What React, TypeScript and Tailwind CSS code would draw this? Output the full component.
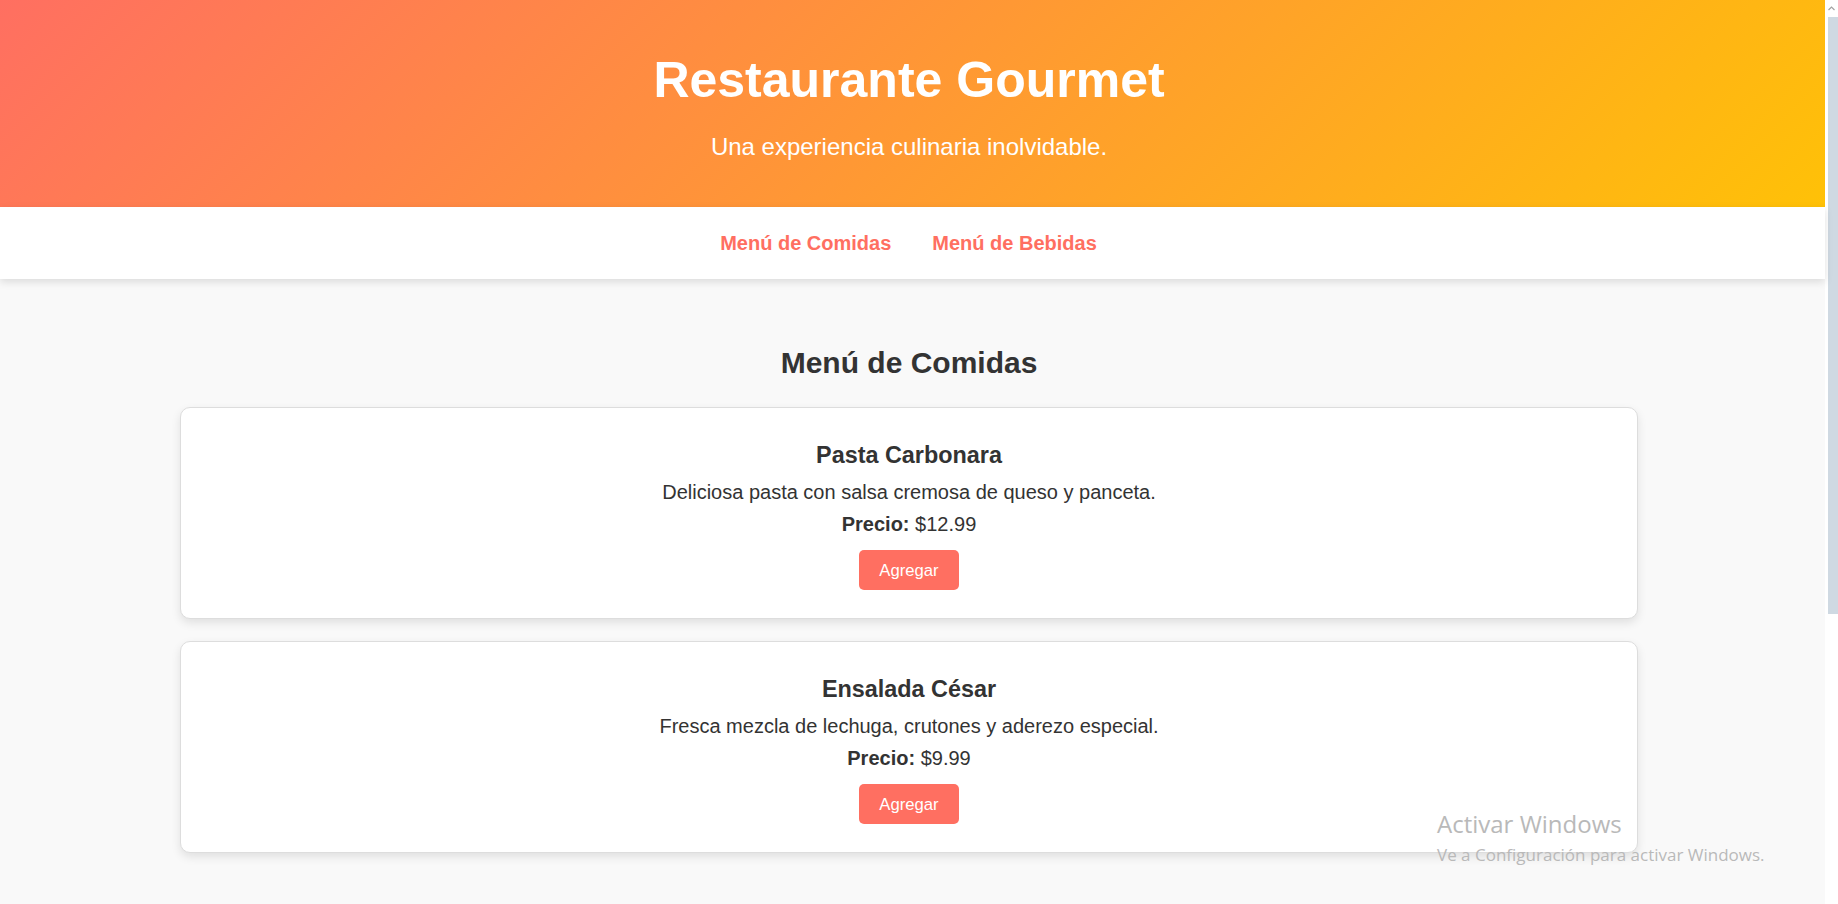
import React from "react";

const items = [
  {
    name: "Pasta Carbonara",
    desc: "Deliciosa pasta con salsa cremosa de queso y panceta.",
    price: "$12.99",
  },
  {
    name: "Ensalada César",
    desc: "Fresca mezcla de lechuga, crutones y aderezo especial.",
    price: "$9.99",
  },
];

function Card({ name, desc, price }: { name: string; desc: string; price: string }) {
  return (
    <div className="flex flex-col items-center rounded-[10px] border border-[#dddddd] bg-white pt-[34px] pb-[28px] text-center shadow-[0_4px_10px_rgba(0,0,0,0.10)]">
      <h3 className="text-[23.4px] leading-[27px] font-bold text-[#333333]">{name}</h3>
      <p className="mt-[12px] text-[20px] leading-[23px] text-[#333333]">{desc}</p>
      <p className="mt-[9px] text-[20px] leading-[23px] text-[#333333]">
        <strong className="font-bold">Precio:</strong> {price}
      </p>
      <button className="mt-[14px] flex h-[40px] items-center justify-center rounded-[5px] bg-[#ff6f61] px-[20px] text-[16.67px] leading-[19px] text-white">
        Agregar
      </button>
    </div>
  );
}

export default function App() {
  return (
    <div className="relative flex h-[904px] w-[1838px] overflow-hidden bg-white font-['Liberation_Sans',Arial,sans-serif]">
      <div className="flex h-[904px] w-[1825px] flex-col bg-[#f9f9f9]">
        <header className="bg-[linear-gradient(135deg,#ff6f61,#ffc107)] pt-[51px] pr-[7px] pb-[46px] text-center text-white">
          <h1 className="text-[50px] leading-[58px] font-bold">Restaurante Gourmet</h1>
          <p className="mt-[24px] text-[24px] leading-[28px]">Una experiencia culinaria inolvidable.</p>
        </header>
        <nav className="relative z-10 flex h-[72px] items-center justify-center gap-[41px] bg-white pr-[8px] shadow-[0_3px_8px_rgba(0,0,0,0.12)]">
          <a className="text-[20px] leading-[23px] font-bold text-[#ff6f61]">Menú de Comidas</a>
          <a className="text-[20px] leading-[23px] font-bold text-[#ff6f61]">Menú de Bebidas</a>
        </nav>
        <main className="pt-[67px] pr-[187px] pl-[180px]">
          <h2 className="text-center text-[30px] leading-[34px] font-bold text-[#333333]">Menú de Comidas</h2>
          <div className="mt-[27px] flex flex-col gap-[22px]">
            {items.map((it) => (
              <Card key={it.name} {...it} />
            ))}
          </div>
        </main>
      </div>
      <div className="flex h-[904px] w-[13px] flex-col items-end bg-white">
        <div className="flex h-[17px] w-[13px] items-center justify-center">
          <svg width="7" height="5" viewBox="0 0 7 5">
            <path d="M0.5 4 L3.5 1 L6.5 4" fill="none" stroke="#a3a3a3" strokeWidth="1.2" />
          </svg>
        </div>
        <div className="h-[597px] w-[10px] bg-[#cfd9e2]" />
      </div>
      <div className="pointer-events-none absolute top-[810px] left-[1437px] font-['Open_Sans','Noto_Sans',sans-serif] text-[#b9b9b9]">
        <div className="text-[24px] leading-[28px]">Activar Windows</div>
        <div className="mt-[7px] text-[17px] leading-[20px]">Ve a Configuración para activar Windows.</div>
      </div>
    </div>
  );
}
